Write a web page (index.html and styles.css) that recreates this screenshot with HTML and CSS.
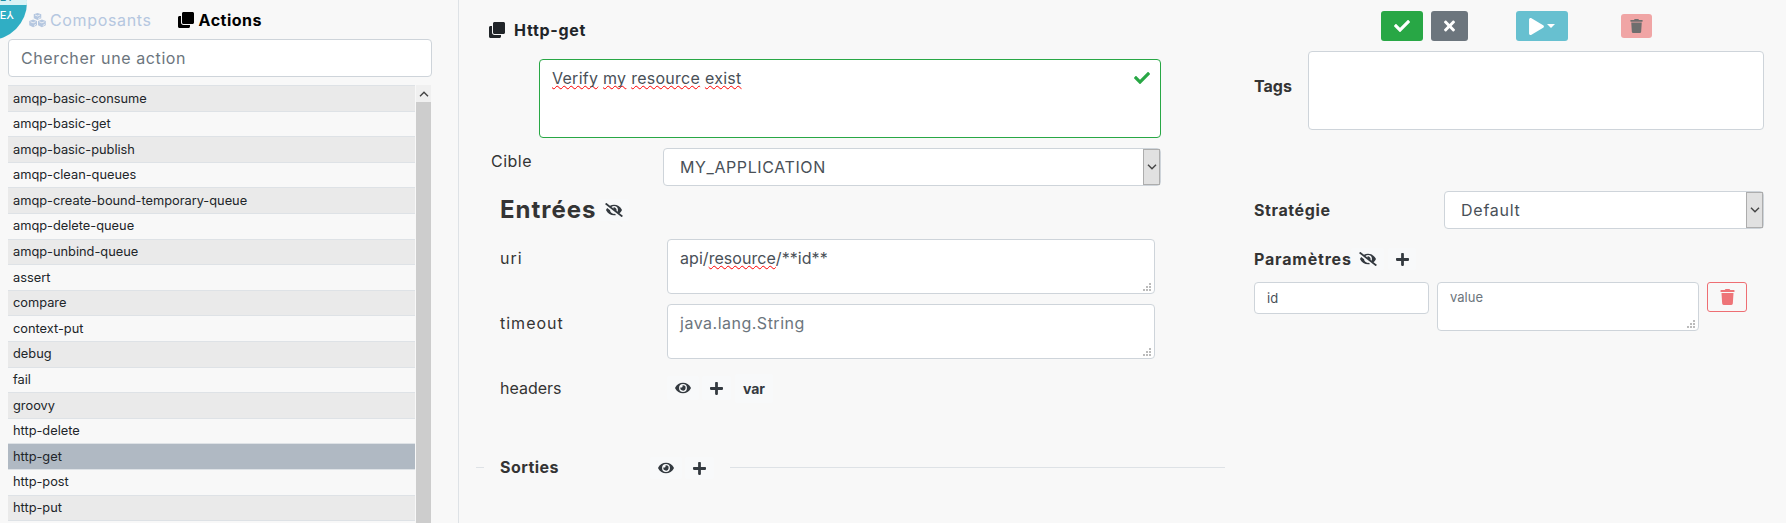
FILE: index.html
```html
<!DOCTYPE html>
<html lang="fr">
<head>
<meta charset="utf-8">
<title>Http-get</title>
<link rel="stylesheet" href="styles.css">
</head>
<body>
<svg class="sprite" aria-hidden="true">
  <symbol id="check" viewBox="0 0 512 512"><path d="M173.898 439.404l-166.4-166.4c-9.997-9.997-9.997-26.206 0-36.204l36.203-36.204c9.997-9.998 26.207-9.998 36.204 0L192 312.69 432.095 72.596c9.997-9.997 26.207-9.997 36.204 0l36.203 36.204c9.997 9.997 9.997 26.206 0 36.204l-294.4 294.401c-9.998 9.997-26.207 9.997-36.204-.001z"/></symbol>
  <symbol id="clone" viewBox="0 0 512 512"><path d="M464 0c26.51 0 48 21.49 48 48v288c0 26.51-21.49 48-48 48H176c-26.51 0-48-21.49-48-48V48c0-26.51 21.49-48 48-48h288M176 416c-44.112 0-80-35.888-80-80V128H48c-26.51 0-48 21.49-48 48v288c0 26.51 21.49 48 48 48h288c26.51 0 48-21.49 48-48v-48H176z"/></symbol>
  <symbol id="times" viewBox="0 0 352 512"><path d="M242.72 256l100.07-100.07c12.28-12.28 12.28-32.19 0-44.48l-22.24-22.24c-12.28-12.28-32.19-12.28-44.48 0L176 189.28 75.93 89.21c-12.28-12.28-32.19-12.28-44.48 0L9.21 111.45c-12.28 12.28-12.28 32.19 0 44.48L109.28 256 9.21 356.07c-12.28 12.28-12.28 32.19 0 44.48l22.24 22.24c12.28 12.28 32.2 12.28 44.48 0L176 322.72l100.07 100.07c12.28 12.28 32.2 12.28 44.48 0l22.24-22.24c12.28-12.28 12.28-32.19 0-44.48L242.72 256z"/></symbol>
  <symbol id="play" viewBox="0 0 448 512"><path d="M424.4 214.7L72.4 6.6C43.8-10.3 0 6.1 0 47.9V464c0 37.5 40.7 60.1 72.4 41.3l352-208c31.4-18.5 31.5-64.1 0-82.6z"/></symbol>
  <symbol id="trash" viewBox="0 0 448 512"><path d="M432 32H312l-9.4-18.7A24 24 0 0 0 281.1 0H166.8a23.72 23.72 0 0 0-21.4 13.3L136 32H16A16 16 0 0 0 0 48v32a16 16 0 0 0 16 16h416a16 16 0 0 0 16-16V48a16 16 0 0 0-16-16zM53.2 467a48 48 0 0 0 47.9 45h245.8a48 48 0 0 0 47.9-45L416 128H32z"/></symbol>
  <symbol id="plus" viewBox="0 0 448 512"><path d="M416 208H272V64c0-17.67-14.33-32-32-32h-32c-17.67 0-32 14.33-32 32v144H32c-17.67 0-32 14.33-32 32v32c0 17.67 14.33 32 32 32h144v144c0 17.67 14.33 32 32 32h32c17.67 0 32-14.33 32-32V304h144c17.67 0 32-14.33 32-32v-32c0-17.67-14.33-32-32-32z"/></symbol>
  <symbol id="eye" viewBox="0 0 576 512"><path d="M572.52 241.4C518.29 135.59 410.93 64 288 64S57.68 135.64 3.48 241.41a32.35 32.35 0 0 0 0 29.19C57.71 376.41 165.07 448 288 448s230.32-71.64 284.52-177.41a32.35 32.35 0 0 0 0-29.19zM288 400a144 144 0 1 1 144-144 143.93 143.93 0 0 1-144 144zm0-240a95.31 95.31 0 0 0-25.31 3.79 47.85 47.85 0 0 1-66.9 66.9A95.78 95.78 0 1 0 288 160z"/></symbol>
  <symbol id="eye-slash" viewBox="0 0 640 512"><path d="M320 400c-75.85 0-137.25-58.71-142.9-133.11L72.2 185.82c-13.79 17.3-26.48 35.59-36.72 55.59a32.35 32.35 0 0 0 0 29.19C89.71 376.41 197.07 448 320 448c26.91 0 52.87-4 77.89-10.46L346 397.39a144.13 144.13 0 0 1-26 2.61zm313.82 58.1l-110.55-85.44a331.25 331.25 0 0 0 81.25-102.07 32.35 32.35 0 0 0 0-29.19C550.29 135.59 442.93 64 320 64a308.15 308.15 0 0 0-147.32 37.7L45.46 3.37A16 16 0 0 0 23 6.18L3.37 31.45A16 16 0 0 0 6.18 53.9l588.36 454.73a16 16 0 0 0 22.46-2.81l19.64-25.27a16 16 0 0 0-2.82-22.45zm-183.72-142l-39.3-30.38A94.75 94.75 0 0 0 416 256a94.76 94.76 0 0 0-121.31-92.21A47.65 47.65 0 0 1 304 192a46.64 46.64 0 0 1-1.54 10l-73.61-56.89A142.31 142.31 0 0 1 320 112a143.92 143.92 0 0 1 144 144c0 21.63-5.29 41.79-13.9 60.11z"/></symbol>
  <symbol id="cubes" viewBox="0 0 34 30"><path d="M17 0l7.500 2.600v8l-7.500 3.400-7.500-3.400v-8zM8.200 13l7.800 2.900v8.600l-7.800 4-7.800-4v-8.600zM25.800 13l7.800 2.900v8.600l-7.800 4-7.800-4v-8.600z"/><path class="cube-edge" d="M12 4l5 2 5-2M3 17.500l5.200 2.200 5.200-2.200M20.600 17.500l5.200 2.200 5.200-2.200M18.500 11l4-1.900M10 25l4-2.200M27.600 25l4-2.200"/></symbol>
  <symbol id="grip" viewBox="0 0 8 8"><path d="M6 0h2v2H6zM3 3h2v2H3zM6 3h2v2H6zM0 6h2v2H0zM3 6h2v2H3zM6 6h2v2H6z"/></symbol>
  <symbol id="chevron" viewBox="0 0 10 6"><path d="M1 .8l4 4 4-4" fill="none" stroke="#444" stroke-width="1.400"/></symbol>
</svg>

<div class="badge"><div class="badge-top"><span>NEY</span></div><span class="badge-mirror">NEY</span></div>

<div class="app">
  <aside class="sidebar">
    <nav class="tabs">
      <a class="tab"><svg class="i-cubes"><use href="#cubes"/></svg><span class="t-comp">Composants</span></a>
      <a class="tab active"><svg class="i16"><use href="#clone"/></svg><span class="t-act">Actions</span></a>
    </nav>
    <div class="field search"><span class="t-search">Chercher une action</span></div>
    <div class="list-wrap">
      <ul class="list">
        <li>amqp-basic-consume</li>
        <li>amqp-basic-get</li>
        <li>amqp-basic-publish</li>
        <li>amqp-clean-queues</li>
        <li>amqp-create-bound-temporary-queue</li>
        <li>amqp-delete-queue</li>
        <li>amqp-unbind-queue</li>
        <li>assert</li>
        <li>compare</li>
        <li>context-put</li>
        <li>debug</li>
        <li>fail</li>
        <li>groovy</li>
        <li>http-delete</li>
        <li class="selected">http-get</li>
        <li>http-post</li>
        <li>http-put</li>
        <li></li>
      </ul>
      <div class="scrollbar"><div class="scroll-up"><svg class="i-up"><use href="#chevron"/></svg></div></div>
    </div>
  </aside>

  <main class="editor">
    <h1 class="title"><svg class="i16"><use href="#clone"/></svg><span>Http-get</span></h1>
    <div class="field description"><p><u>Verify</u> <u>my</u> <u>resource</u> <u>exist</u></p><svg class="i16 valid"><use href="#check"/></svg></div>
    <div class="target">
      <label>Cible</label>
      <div class="field select"><span class="t-app">MY_APPLICATION</span><i><svg class="i-down"><use href="#chevron"/></svg></i></div>
    </div>
    <section class="inputs">
      <h2><span>Entrées</span><b class="chip"><svg class="i-slash"><use href="#eye-slash"/></svg></b></h2>
      <div class="row"><label class="t-name">uri</label><div class="field area"><span class="t-uri">api/<u>resource</u>/**id**</span><svg class="grip"><use href="#grip"/></svg></div></div>
      <div class="row"><label class="t-name">timeout</label><div class="field area hint"><span class="t-java">java.lang.String</span><svg class="grip"><use href="#grip"/></svg></div></div>
      <div class="row headers"><label>headers</label><b class="chip"><svg class="i-eye"><use href="#eye"/></svg></b><b class="chip"><svg class="i-plus"><use href="#plus"/></svg></b><b class="chip var">var</b></div>
    </section>
    <section class="outputs">
      <hr class="short"><h3>Sorties</h3><b class="chip"><svg class="i-eye"><use href="#eye"/></svg></b><b class="chip"><svg class="i-plus"><use href="#plus"/></svg></b><hr class="long">
    </section>
  </main>

  <aside class="settings">
    <div class="toolbar">
      <button class="btn ok"><svg class="i16"><use href="#check"/></svg></button>
      <button class="btn cancel"><svg class="i-times"><use href="#times"/></svg></button>
      <button class="btn run"><svg class="i-play"><use href="#play"/></svg><i class="caret"></i></button>
      <button class="btn delete"><svg class="i-trash"><use href="#trash"/></svg></button>
    </div>
    <div class="tags"><label>Tags</label><div class="field"></div></div>
    <div class="strategy">
      <label>Stratégie</label>
      <div class="field select"><span class="t-def">Default</span><i><svg class="i-down"><use href="#chevron"/></svg></i></div>
    </div>
    <div class="params-head"><label>Paramètres</label><b class="chip"><svg class="i-slash"><use href="#eye-slash"/></svg></b><b class="chip"><svg class="i-plus"><use href="#plus"/></svg></b></div>
    <div class="params">
      <div class="field name">id</div>
      <div class="field value hint">value<svg class="grip"><use href="#grip"/></svg></div>
      <button class="btn remove"><svg class="i-bin"><use href="#trash"/></svg></button>
    </div>
  </aside>
</div>
</body>
</html>
```
FILE: styles.css
```css
* { box-sizing: border-box; }
body {
  margin: 0;
  height: 523px;
  overflow: hidden;
  background: #f8f8f8;
  color: #343434;
  font: 380 16px/24px Inter, "Open Sans", sans-serif;
}
h1, h2, h3, p, ul { margin: 0; padding: 0; font-size: 16px; }
svg { display: block; flex: none; fill: currentColor; }
u { text-decoration: underline wavy #f00 1px; text-underline-offset: 1px; text-decoration-skip-ink: none; }
.sprite { position: absolute; width: 0; height: 0; }
.cube-edge { fill: none; stroke: #f8f8f8; stroke-width: 1.6; }

.i16 { width: 16px; height: 16px; }
.i-cubes { width: 17px; height: 15px; }
.i-eye { width: 16px; height: 14px; }
.i-plus { width: 13px; height: 15px; }
.i-slash { width: 18px; height: 14px; }
.i-times { width: 11px; height: 16px; }
.i-play { width: 15px; height: 17px; }
.i-trash { width: 13px; height: 14px; }
.i-bin { width: 15px; height: 16px; }
.i-down { width: 10px; height: 6px; }
.i-up { width: 10px; height: 6px; transform: scaleY(-1); }

/* Per-label tracking */
.t-comp { letter-spacing: .65px; }
.t-act { letter-spacing: .5px; }
.t-search { letter-spacing: .6px; }
.description p { letter-spacing: .27px; }
.target label { letter-spacing: .5px; }
.t-app { letter-spacing: .6px; }
.inputs h2 span { letter-spacing: 1px; }
.t-name { letter-spacing: 1px; }
.t-uri { letter-spacing: .05px; }
.t-java { letter-spacing: .5px; }
.outputs h3 { letter-spacing: .45px; }
.title span { letter-spacing: .7px; }
.strategy label { letter-spacing: .6px; }
.t-def { letter-spacing: .75px; }
.params-head label { letter-spacing: .8px; }

.app { display: flex; height: 523px; }
.field {
  position: relative;
  background: #fff;
  border: 1px solid #ced4da;
  border-radius: 4px;
  color: #495057;
}
.hint, .search { color: #6c757d; }
.grip { position: absolute; right: 3px; bottom: 2px; width: 8px; height: 8px; fill: #bbb; }

/* Logo disc overlapping the top-left corner */
.badge {
  position: absolute;
  left: -48px;
  top: -35px;
  width: 75px;
  height: 75px;
  border-radius: 50%;
  overflow: hidden;
  background: #30aec4;
  color: #fff;
  font: 500 11px/11px Inter, sans-serif;
  text-align: right;
}
.badge-top { height: 40px; padding: 27px 13px 0 0; background: #d9f3f6; color: #1c8fa5; }
.badge-mirror { display: block; padding-right: 13px; margin-top: 4px; transform: scaleY(-1); }

.sidebar { width: 459px; padding: 8px 0 0 8px; border-right: 1px solid #dee2e6; }
.tabs { display: flex; gap: 26px; height: 31px; padding-left: 21px; }
.tab { display: flex; gap: 4px; height: 24px; align-items: center; color: #b5c7e0; }
.tab.active { gap: 5px; color: #000; font-weight: 700; }
.search { width: 424px; height: 38px; padding: 6px 12px; }
.list-wrap { display: flex; width: 424px; height: 438px; margin-top: 8px; overflow: hidden; }
.list { width: 407px; list-style: none; font-size: 12.8px; font-weight: 400; }
.list li { height: 25.6px; padding: 2.5px 5px 0; border-top: 1px solid #dee2e6; line-height: 19px; color: #212529; }
.list li:nth-child(odd) { background: #eaeaea; }
.list li.selected { background: #b0b9c3; }
.scrollbar { width: 15px; margin-left: 1px; background: #cdcdcd; }
.scroll-up { display: flex; align-items: center; justify-content: center; height: 17px; background: #f0f0f0; }

.editor { width: 766px; padding: 18px 0 0 17px; }
.title { display: flex; align-items: center; gap: 9px; height: 24px; padding-left: 13px; color: #212529; }
.description { width: 622px; height: 79px; margin: 17px 0 0 63px; padding: 6px 12px; border-color: #28a745; }
.valid { position: absolute; right: 10px; top: 10px; color: #28a745; }
.target { display: flex; margin-top: 10px; padding-left: 15px; }
.target label { width: 172px; padding-top: 1px; }
.select { display: flex; align-items: center; height: 38px; padding-left: 16px; }
.target .select { width: 498px; }
.select i { display: flex; align-items: center; justify-content: center; width: 17px; height: 36px; margin-left: auto; background: #e1e1e1; border: 1px solid #adadad; }
.chip { display: flex; align-items: center; justify-content: center; background: #f8f9fa; border-radius: 3px; color: #343a40; }
.inputs { padding-left: 24px; }
.inputs h2 { display: flex; align-items: center; gap: 1px; height: 48px; font-size: 24px; }
.inputs h2 span { width: 97px; }
.inputs h2 .chip { width: 31px; height: 22px; }
.row { display: flex; height: 65px; padding-top: 5px; }
.row label { width: 167px; padding-top: 7px; }
.area { width: 488px; height: 55px; padding: 6px 12px; }
.headers { padding-top: 5px; }
.headers .chip { width: 32px; height: 24px; margin-top: 7px; margin-right: 3px; }
.headers .var { width: 38px; height: 29px; margin: 5px 0 0 1px; font-size: 14px; }
.headers .chip:nth-child(3) { width: 29px; }
.outputs { display: flex; align-items: center; height: 24px; margin-top: 26px; }
.outputs hr { height: 1px; margin: 0; border: 0; background: #dee2e6; }
.short { width: 8px; }
.outputs h3 { width: 150px; margin-left: 16px; }
.outputs .chip { width: 32px; height: 22px; margin: 2px 3px 0 0; }
.outputs .chip + .chip { width: 29px; margin-right: 0; }
.outputs .long { width: 495px; margin-left: 16px; }

.settings { width: 561px; padding: 11px 0 0 29px; }
.settings label { font-weight: 700; }
.toolbar { display: flex; align-items: center; height: 30px; padding-left: 127px; }
.btn { display: flex; align-items: center; justify-content: center; height: 30px; padding: 0; border: 0; border-radius: 3px; color: #fff; }
.ok { width: 42px; background: #28a745; }
.cancel { width: 37px; margin-left: 8px; background: #6c757d; }
.run { width: 52px; gap: 3px; margin-left: 48px; background: #67c0d0; }
.caret { border: 4px solid transparent; border-top-color: #fff; border-bottom: 0; }
.delete { width: 31px; height: 24px; margin-left: 53px; background: #f0a5a5; color: #6e6e6e; }
.tags { display: flex; align-items: center; margin-top: 10px; }
.tags label { width: 54px; padding-bottom: 9px; }
.tags .field { width: 456px; height: 79px; }
.strategy { display: flex; align-items: center; margin-top: 61px; }
.strategy label { width: 190px; }
.strategy .select { width: 320px; }
.params-head { display: flex; align-items: center; height: 24px; margin-top: 18px; }
.params-head label { width: 97px; padding-bottom: 1px; }
.params-head .chip { width: 33px; height: 22px; margin-right: 4px; }
.params-head .chip:last-child { width: 28px; }
.params { display: flex; gap: 8px; margin-top: 11px; font-size: 13px; line-height: 20px; }
.name { width: 175px; height: 32px; padding: 5px 12px; }
.value { width: 262px; height: 49px; padding: 4px 12px; }
.remove { width: 40px; background: transparent; border: 1px solid #ee6e73; color: #ee7478; }
```
